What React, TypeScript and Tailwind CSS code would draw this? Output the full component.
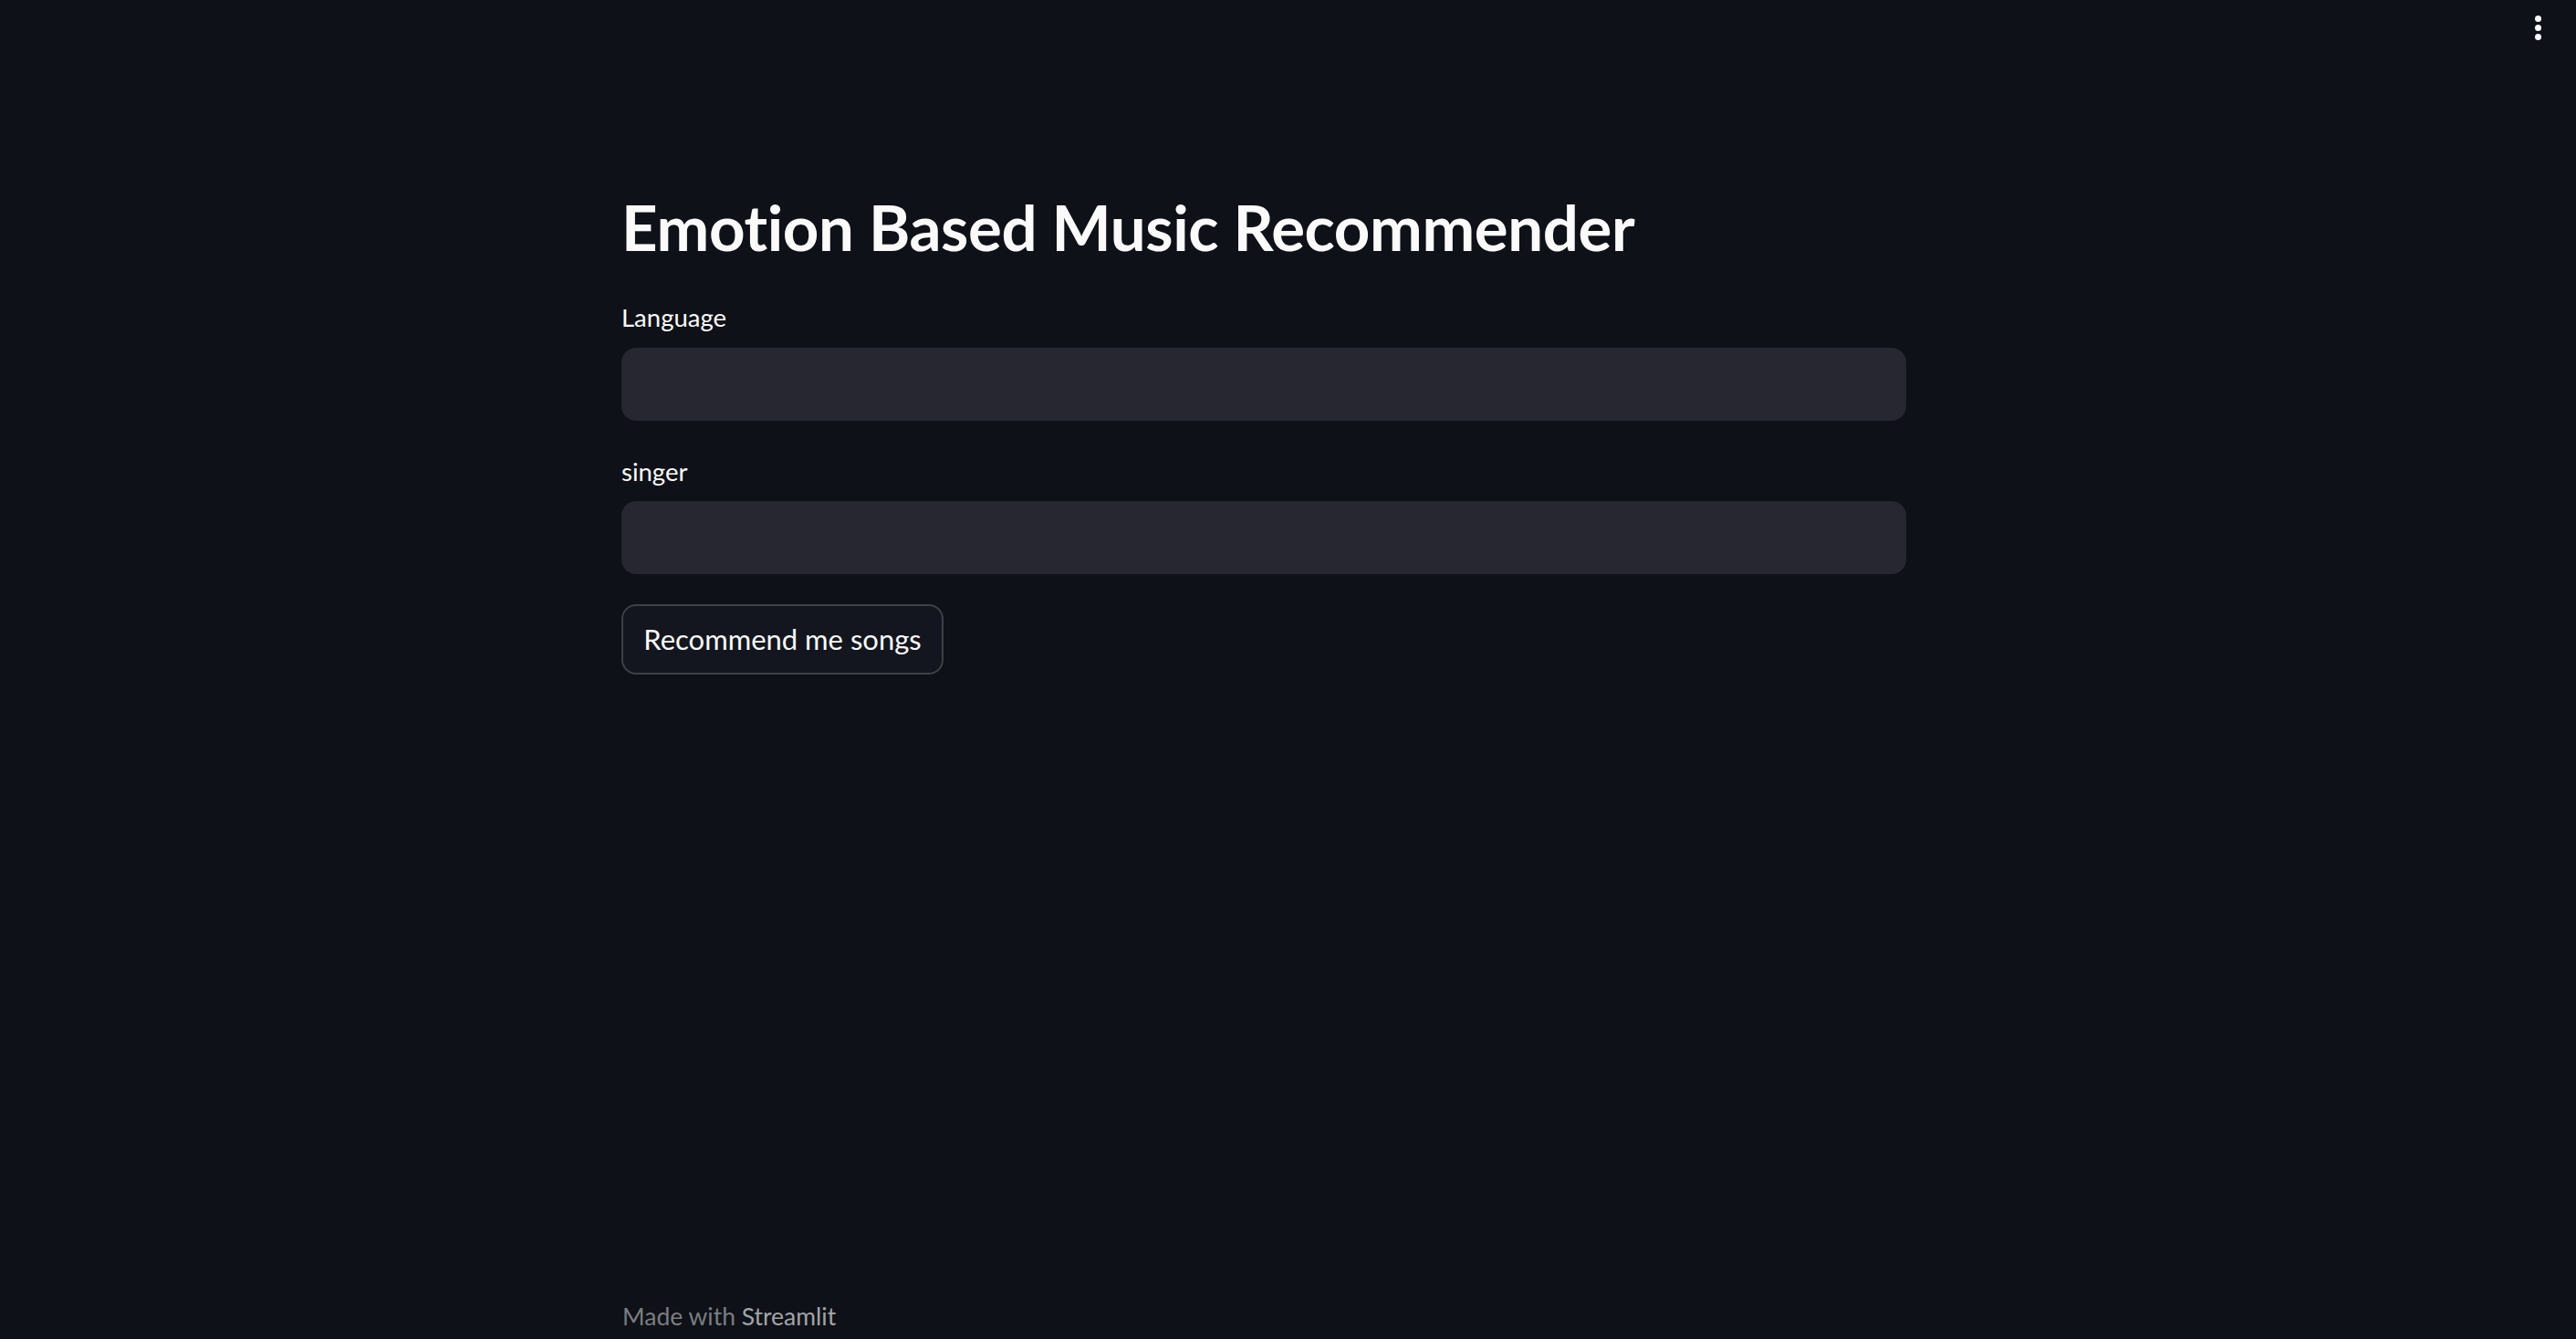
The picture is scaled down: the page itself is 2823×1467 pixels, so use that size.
import React from "react";

export default function App() {
  return (
    <div
      className="relative flex min-h-screen w-full flex-col bg-[#0e1117] text-[#fafafa]"
      style={{ fontFamily: "Lato, 'Noto Sans', sans-serif" }}
    >
      <div className="absolute right-[38px] top-[17px] flex flex-col items-center gap-[3px]">
        <span className="block h-[7px] w-[7px] rounded-full bg-[#fafafa]" />
        <span className="block h-[7px] w-[7px] rounded-full bg-[#fafafa]" />
        <span className="block h-[7px] w-[7px] rounded-full bg-[#fafafa]" />
      </div>

      <main className="ml-[681px] flex w-[1408px] flex-col pt-[214px]">
        <h1 className="text-[69px] font-bold leading-none tracking-[-0.4px]">
          Emotion Based Music Recommender
        </h1>

        <label className="mt-[51px] text-[27.5px] leading-none">Language</label>
        <div className="mt-[19px] h-[80px] w-full rounded-[16px] bg-[#262730]" />

        <label className="mt-[42px] text-[27.5px] leading-none">singer</label>
        <div className="mt-[19px] h-[80px] w-full rounded-[16px] bg-[#262730]" />

        <button className="mt-[33px] flex h-[77px] w-[353px] items-center justify-center rounded-[16px] border-2 border-[#3d4045] bg-[#13161e] text-[31px] leading-none text-[#fafafa]">
          Recommend me songs
        </button>
      </main>

      <footer className="ml-[682px] mt-auto pb-[12px] text-[26.5px] leading-none">
        <span className="text-[#7c7d82]">Made with </span>
        <span className="text-[#a3a4a8]">Streamlit</span>
      </footer>
    </div>
  );
}
